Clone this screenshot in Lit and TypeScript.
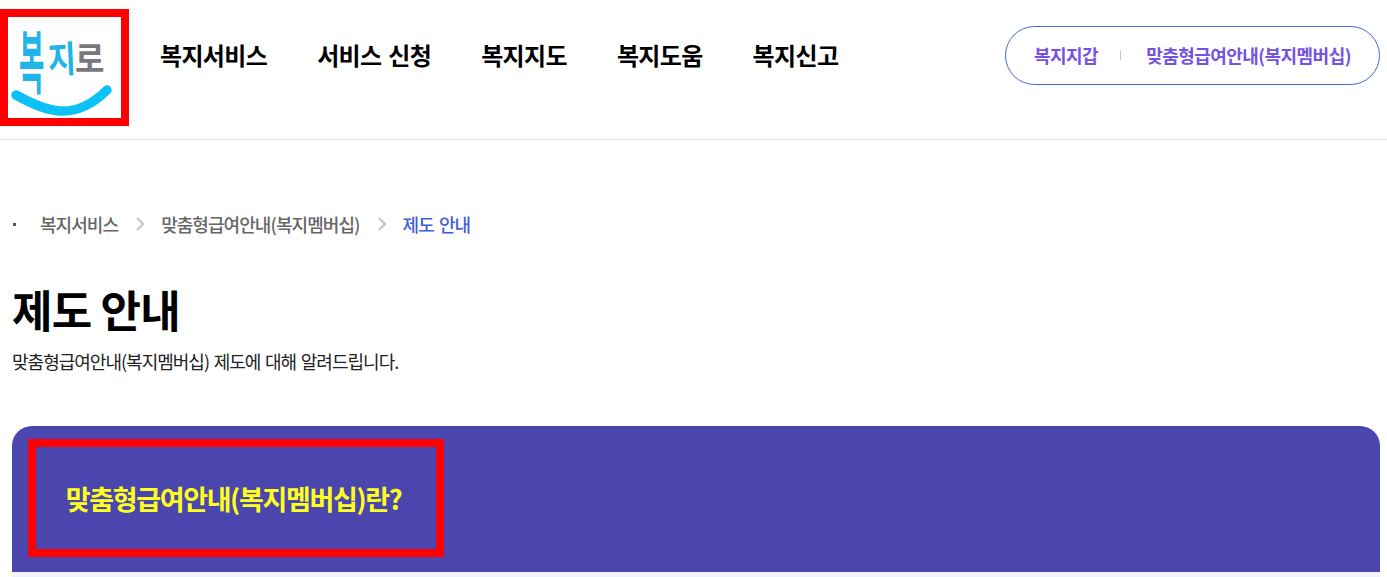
import { LitElement, html, css } from "lit";
import { customElement } from "lit/decorators.js";

@customElement("app-root")
export class AppRoot extends LitElement {
  static styles = css`
    :host { display: block; height: 577px; overflow: hidden; background: #fff; font-family: "Noto Sans CJK KR", "Noto Sans", sans-serif; color: #000; letter-spacing: -0.05em; }
    header { height: 139px; border-bottom: 1px solid #ddd; display: flex; align-items: flex-start; }
    .logo { box-sizing: border-box; width: 129px; height: 117px; margin-top: 9px; border: 8px solid #f00; position: relative; flex: none; overflow: hidden; background: #fff; }
    .lt { position: absolute; line-height: 1; letter-spacing: 0; transform-origin: left top; }
    .l1 { left: 11px; top: 7px; font-size: 30px; color: #20b4e8; font-weight: 700; transform: scale(.92, 2.3); }
    .l2 { left: 39px; top: 22px; font-size: 32px; color: #20b4e8; font-weight: 700; transform: scale(.95, 1.15) rotate(-3deg); }
    .l3 { left: 67px; top: 22px; font-size: 32px; color: #77777d; font-weight: 700; transform: scale(1, 1.1); }
    .smile { position: absolute; left: 0; top: 0; }
    nav { display: flex; gap: 50px; margin: 37px 0 0 31px; font-size: 24px; font-weight: 700; line-height: 36px; white-space: nowrap; letter-spacing: -0.027em; word-spacing: 2px; }
    .util { box-sizing: border-box; width: 375px; height: 59px; margin: 26px 7px 0 auto; padding-bottom: 1px; border: 1px solid #4a65d6; border-radius: 30px; display: flex; align-items: center; justify-content: center; font-size: 18px; font-weight: 700; color: #7552e6; white-space: nowrap; letter-spacing: -0.03em; }
    .sep { width: 1px; height: 10px; background: #c4c4e4; margin: 0 25px 0 22px; }
    main { padding: 0 7px 0 12px; }
    .crumbs { display: flex; align-items: center; margin-top: 70px; height: 28px; font-size: 18px; font-weight: 500; color: #666; white-space: nowrap; letter-spacing: -0.052em; word-spacing: 2px; }
    .dot { width: 3px; height: 3px; background: #555; margin: 0 24px 0 1px; }
    .chev { margin: 0 17px 0 18px; flex: none; }
    .cur { color: #3f5fd6; }
    h1 { margin: 39px 0 0; font-size: 44px; line-height: 65px; font-weight: 700; }
    .desc { margin: 6px 0 0; font-size: 18px; line-height: 26px; color: #222; letter-spacing: -0.055em; word-spacing: 1.6px; }
    .panel { margin-top: 52px; height: 146px; background: #4a46ad; border-radius: 20px 20px 0 0; position: relative; }
    .title { box-sizing: border-box; position: absolute; left: 16px; top: 13px; width: 416px; height: 118px; border: 8px solid #f00; display: flex; align-items: center; justify-content: center; margin: 0; padding-right: 5px; color: #ffff1e; font-size: 27px; font-weight: 700; white-space: nowrap; letter-spacing: -0.05em; }
    .strip { height: 5px; background: #f1f4fd; }
  `;

  render() {
    const chev = html`<svg class="chev" width="8" height="14" viewBox="0 0 8 14" fill="none" stroke="#c8c8c8" stroke-width="2.4"><path d="M1 1l6 6-6 6"/></svg>`;
    return html`
      <header>
        <div class="logo">
          <span class="lt l1">복</span><span class="lt l2">지</span><span class="lt l3">로</span>
          <svg class="smile" width="113" height="101" viewBox="0 0 113 101" fill="none"><path d="M8 78C24 87 38 93 52 94C70 95 86 86 99 73" stroke="#0dc1f4" stroke-width="9.5" stroke-linecap="round"/></svg>
        </div>
        <nav><span>복지서비스</span><span>서비스 신청</span><span>복지지도</span><span>복지도움</span><span>복지신고</span></nav>
        <div class="util"><span>복지지갑</span><i class="sep"></i><span>맞춤형급여안내(복지멤버십)</span></div>
      </header>
      <main>
        <div class="crumbs"><i class="dot"></i><span>복지서비스</span>${chev}<span>맞춤형급여안내(복지멤버십)</span>${chev}<span class="cur">제도 안내</span></div>
        <h1>제도 안내</h1>
        <p class="desc">맞춤형급여안내(복지멤버십) 제도에 대해 알려드립니다.</p>
        <section class="panel"><h2 class="title">맞춤형급여안내(복지멤버십)란?</h2></section>
        <div class="strip"></div>
      </main>
    `;
  }
}
